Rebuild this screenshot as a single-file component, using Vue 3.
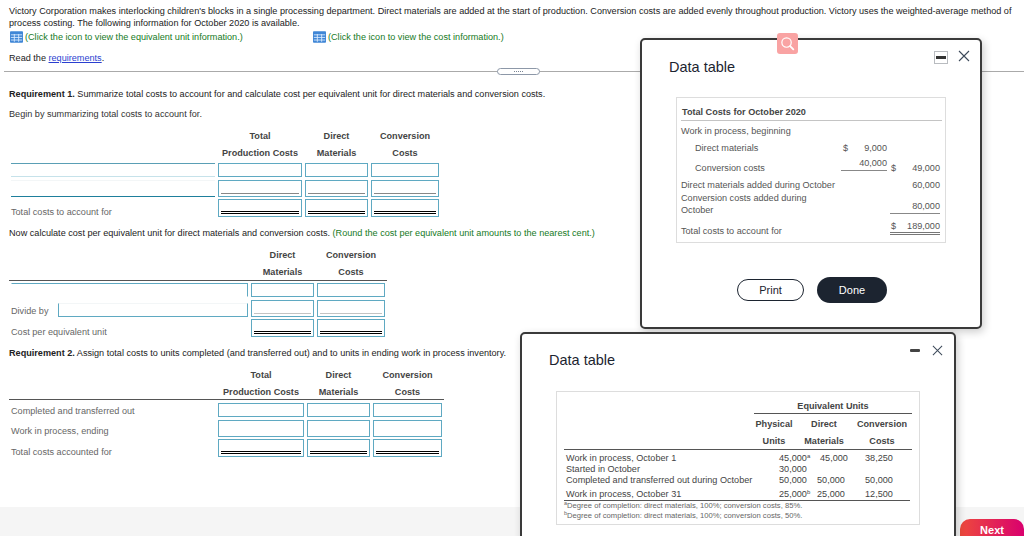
<script setup>
const table1Rows = [
  { label: '', kind: 'plain', h: 'r1', labelClass: 'line-a' },
  { label: '', kind: 'single', h: 'r2', labelClass: 'line-b' },
  { label: 'Total costs to account for', kind: 'double', h: 'r3', labelClass: '' },
]
const table3Rows = [
  { label: 'Completed and transferred out', kind: 'plain', h: 'r1' },
  { label: 'Work in process, ending', kind: 'plain', h: 'r2' },
  { label: 'Total costs accounted for', kind: 'double', h: 'r3' },
]
const units = [
  { label: 'Work in process, October 1', a: '45,000', sup: 'a', b: '45,000', c: '38,250', shiftB: true },
  { label: 'Started in October', a: '30,000', sup: '', b: '', c: '' },
  { label: 'Completed and transferred out during October', a: '50,000', sup: '', b: '50,000', c: '50,000' },
  { label: 'Work in process, October 31', a: '25,000', sup: 'b', b: '25,000', c: '12,500', tall: true },
]
</script>

<template>
  <div class="page">
    <main class="content">
      <p class="para">Victory Corporation makes interlocking children's blocks in a single processing department. Direct materials are added at the start of production. Conversion costs are added evenly throughout production. Victory uses the weighted-average method of process costing. The following information for October 2020 is available.</p>
      <div class="links">
        <span class="link-item link-first">
          <svg class="grid-icon" viewBox="0 0 15 13"><rect width="15" height="13" rx="1" fill="#3f86d6"/><path d="M1 4h13M1 7h13M1 10h13M5 3v9M10 3v9" stroke="#dcecff" stroke-width="1"/></svg>
          <span class="green">(Click the icon to view the equivalent unit information.)</span>
        </span>
        <span class="link-item">
          <svg class="grid-icon" viewBox="0 0 15 13"><rect width="15" height="13" rx="1" fill="#3f86d6"/><path d="M1 4h13M1 7h13M1 10h13M5 3v9M10 3v9" stroke="#dcecff" stroke-width="1"/></svg>
          <span class="green">(Click the icon to view the cost information.)</span>
        </span>
      </div>
      <p class="read">Read the <a class="req-link">requirements</a>.</p>
      <div class="divider"><span class="handle"><i v-for="n in 5" :key="n"></i></span></div>

      <p class="req1"><b>Requirement 1.</b> Summarize total costs to account for and calculate cost per equivalent unit for direct materials and conversion costs.</p>
      <p class="begin">Begin by summarizing total costs to account for.</p>

      <section class="table t1">
        <div class="head"></div><div class="head">Total</div><div class="head">Direct</div><div class="head">Conversion</div>
        <div class="head"></div><div class="head">Production Costs</div><div class="head">Materials</div><div class="head">Costs</div>
        <template v-for="(row, i) in table1Rows" :key="i">
          <div class="label" :class="[row.h, row.labelClass]">{{ row.label }}</div>
          <div v-for="n in 3" :key="n" class="cell" :class="row.h"><div :class="row.kind"></div></div>
        </template>
      </section>

      <p class="now">Now calculate cost per equivalent unit for direct materials and conversion costs. <span class="green">(Round the cost per equivalent unit amounts to the nearest cent.)</span></p>

      <section class="table t2">
        <div class="head"></div><div class="head">Direct</div><div class="head">Conversion</div>
        <div class="head ruled"></div><div class="head ruled">Materials</div><div class="head ruled">Costs</div>
        <div class="cell r1 wide"></div>
        <div class="cell r1"></div><div class="cell r1"></div>
        <div class="label r2 divide"><span>Divide by</span><div class="cell divide-input"></div></div>
        <div class="cell r2"><div class="single light"></div></div><div class="cell r2"><div class="single light"></div></div>
        <div class="label r3">Cost per equivalent unit</div>
        <div class="cell r3"><div class="double"></div></div><div class="cell r3"><div class="double"></div></div>
      </section>

      <p class="req2"><b>Requirement 2.</b> Assign total costs to units completed (and transferred out) and to units in ending work in process inventory.</p>

      <section class="table t3">
        <div class="head"></div><div class="head">Total</div><div class="head">Direct</div><div class="head">Conversion</div>
        <div class="head ruled"></div><div class="head ruled">Production Costs</div><div class="head ruled">Materials</div><div class="head ruled">Costs</div>
        <template v-for="(row, i) in table3Rows" :key="i">
          <div class="label" :class="row.h">{{ row.label }}</div>
          <div v-for="n in 3" :key="n" class="cell" :class="row.h"><div :class="row.kind"></div></div>
        </template>
      </section>
    </main>

    <footer class="footer"><button class="next">Next</button></footer>

    <!-- cost window -->
    <div class="window win-cost">
      <div class="search-tab">
        <svg viewBox="0 0 16 16" width="15" height="15"><circle cx="7" cy="7" r="5" fill="none" stroke="#fff" stroke-width="1.3"/><path d="M10.8 10.8l3.4 3.4" stroke="#fff" stroke-width="2" stroke-linecap="round"/></svg>
      </div>
      <div class="win-controls cost-controls">
        <span class="min-box"><i></i></span>
        <svg class="close close-up" viewBox="0 0 12 12"><path d="M1 1l10 10M11 1L1 11" stroke="#3d4a5a" stroke-width="1.1"/></svg>
      </div>
      <h2 class="win-title">Data table</h2>
      <div class="data-box cost-box">
        <div class="cost-title">Total Costs for October 2020</div>
        <div class="cost-row row-a"><span>Work in process, beginning</span></div>
        <div class="cost-row row-b">
          <span class="indent">Direct materials</span>
          <span class="amt"><i>$</i><i>9,000</i></span><span class="amt2"></span>
        </div>
        <div class="cost-row row-c">
          <span class="indent">Conversion costs</span>
          <span class="amt amt-under"><i></i><i>40,000</i></span>
          <span class="amt2"><i>$</i><i>49,000</i></span>
        </div>
        <div class="cost-row row-d">
          <span>Direct materials added during October</span><span class="amt"></span>
          <span class="amt2"><i></i><i>60,000</i></span>
        </div>
        <div class="cost-row row-e">
          <span class="wrap">Conversion costs added during October</span><span class="amt"></span>
          <span class="amt2 amt2-under"><i></i><i>80,000</i></span>
        </div>
        <div class="cost-row row-f">
          <span class="last-label">Total costs to account for</span><span class="amt"></span>
          <span class="amt2 amt2-double"><i>$</i><i>189,000</i></span>
        </div>
      </div>
      <div class="win-actions">
        <button class="btn-print">Print</button>
        <button class="btn-done">Done</button>
      </div>
    </div>

    <!-- units window -->
    <div class="window win-units">
      <div class="win-controls units-controls">
        <span class="min-bar"></span>
        <svg class="close close-sm" viewBox="0 0 12 12"><path d="M1 1l10 10M11 1L1 11" stroke="#3d4a5a" stroke-width="1.1"/></svg>
      </div>
      <h2 class="win-title units-title">Data table</h2>
      <div class="data-box units-box">
        <div class="eq-head"><span>Equivalent Units</span></div>
        <div class="u-head"><span></span><span>Physical</span><span>Direct</span><span>Conversion</span></div>
        <div class="u-head u-head-b"><span></span><span>Units</span><span>Materials</span><span>Costs</span></div>
        <div v-for="(u, i) in units" :key="i" class="u-row" :class="{ tall: u.tall }">
          <span>{{ u.label }}</span>
          <span>{{ u.a }}<sup v-if="u.sup">{{ u.sup }}</sup></span>
          <span :class="{ 'num-b': u.shiftB }">{{ u.b }}</span>
          <span>{{ u.c }}</span>
        </div>
        <div class="note note-a"><sup>a</sup>Degree of completion: direct materials, 100%; conversion costs, 85%.</div>
        <div class="note"><sup>b</sup>Degree of completion: direct materials, 100%; conversion costs, 50%.</div>
      </div>
    </div>
  </div>
</template>

<style>
html, body { margin: 0; padding: 0; background: #fff; }
</style>

<style scoped>
.page {
  position: relative;
  width: 1024px;
  height: 536px;
  overflow: hidden;
  display: flex;
  flex-direction: column;
  background: #fff;
  font-family: "Liberation Sans", Arial, sans-serif;
  font-size: 9.12px;
  line-height: 12px;
  color: #222;
}
p { margin: 0; }
.content { flex: 1; padding: 5px 0 0 9px; min-height: 0; }
.para { width: 1010px; }
.green { color: #167a1e; }
.links { display: flex; height: 14px; margin-top: 1px; align-items: center; }
.link-item { display: flex; align-items: center; gap: 2px; }
.link-first { width: 304px; flex: none; padding-left: 1px; box-sizing: border-box; }
.grid-icon { width: 13px; height: 12px; flex: none; }
.read { margin-top: 8px; }
.req-link { color: #2a3fd0; text-decoration: underline; }
.divider {
  margin: 7px 0 0 -5px;
  height: 1px;
  background: #aaa;
  display: flex;
  align-items: center;
}
.handle {
  margin-left: 493px;
  width: 41px;
  height: 5px;
  border: 1px solid #8d98a8;
  border-radius: 4px;
  background: #fff;
  display: flex;
  align-items: center;
  justify-content: center;
  gap: 1px;
}
.handle i { width: 1px; height: 1px; background: #7a8594; }
.req1 { margin-top: 16px; }
.begin { margin-top: 8px; color: #333; }

.table { display: grid; margin-left: 2px; }
.t1 { margin-top: 8px; grid-template-columns: 204px 84px 63px 68px; column-gap: 3px; }
.t2 { margin-top: 8px; grid-template-columns: 237px 63px 68px; column-gap: 3px; }
.t3 { margin-top: 8px; grid-template-columns: 204px 86px 63px 69px; column-gap: 3px; }
.head {
  height: 17px;
  line-height: 17px;
  text-align: center;
  font-weight: 700;
  color: #444;
  white-space: nowrap;
}
.ruled { height: 16px; line-height: 17px; box-sizing: border-box; border-bottom: 1px solid #555; margin: 0 -1.5px; }
.t2 .ruled { height: 17px; }
.t2 .head.ruled:nth-child(4), .t3 .head.ruled:nth-child(5) { margin-left: -2px; }
.r1 { height: 14px; margin-top: 2px; }
.r2 { height: 17px; margin-top: 3px; }
.r3 { height: 18px; margin-top: 2px; }
.t1 .r1 { margin-top: 1px; }
.t3 .r1 { margin-top: 3px; }
.label { display: flex; align-items: center; color: #666; white-space: nowrap; padding-top: 1px; box-sizing: border-box; }
.r3.label { padding-top: 8px; }
.t3 .r2.label { padding-top: 5px; }
.line-a { border-top: 1px solid #5a9fb5; border-bottom: 1px solid #c6e2ea; }
.line-b { border-top: 1px solid #f3f6f7; border-bottom: 1px solid #1e7f9c; }
.cell {
  box-sizing: border-box;
  border: 1px solid #5fa9c2;
  background: #fff;
  padding: 0 2px 2px;
  display: flex;
  flex-direction: column;
  justify-content: flex-end;
}
.single { border-bottom: 1px solid #888; }
.single.light { border-bottom-color: #c4c4c4; }
.double { border-bottom: 3px double #000; }
.wide { border-left-color: transparent; border-bottom-color: transparent; }
.divide { padding-top: 4px; }
.divide span { width: 47px; flex: none; }
.divide-input { flex: 1; height: 14px; align-self: flex-end; border-top-color: #f3f6f7; }

.now { margin-top: 10px; }
.req2 { margin-top: 10px; }

.footer {
  flex: none;
  height: 29px;
  padding-top: 12px;
  box-sizing: border-box;
  background: #f5f5f5;
  display: flex;
  justify-content: flex-end;
  align-items: flex-start;
  overflow: hidden;
}
.next {
  width: 64px;
  height: 22px;
  border: 0;
  padding: 0;
  border-radius: 10px 10px 0 0;
  background: linear-gradient(90deg, #ee4a3c, #d9006e);
  color: #fff;
  font: 700 11px "Liberation Sans", Arial, sans-serif;
}

.window {
  position: absolute;
  box-sizing: border-box;
  background: #fff;
  border: 2px solid #3a3a3a;
  border-radius: 5px;
  box-shadow: 2px 3px 8px rgba(0, 0, 0, 0.2);
}
.win-cost { left: 640px; top: 38px; width: 342px; height: 291px; display: flex; flex-direction: column; }
.win-units { left: 520px; top: 332px; width: 436px; height: 230px; }
.win-title {
  margin: 18px 0 0 27px;
  font-size: 14.5px;
  line-height: 18px;
  font-weight: 400;
  color: #1c2430;
}
.units-title { margin-top: 17px; }
.search-tab {
  position: absolute;
  left: 135px;
  top: -7px;
  width: 21px;
  height: 21px;
  background: #f9a3a3;
  border-radius: 3px;
  display: flex;
  align-items: center;
  justify-content: center;
}
.win-controls { position: absolute; display: flex; align-items: center; }
.cost-controls { left: 292px; top: 11px; gap: 10px; }
.units-controls { left: 388px; top: 11px; gap: 12px; }
.min-box {
  width: 14px;
  height: 13px;
  box-sizing: border-box;
  border: 1px solid #b9bcc0;
  display: flex;
  align-items: center;
  justify-content: center;
}
.min-box i { width: 10px; height: 3px; background: #333; }
.min-bar { width: 10px; height: 3px; background: #444; border-radius: 1px; }
.close { width: 12px; height: 12px; }
.close-up { margin-top: -3px; }
.close-sm { width: 11px; height: 11px; }
.data-box { box-sizing: border-box; border: 1px solid #ddd; color: #555; }
.cost-box { margin: 21px 0 0 34px; width: 270px; height: 146px; padding: 7px 3px 0 4px; }
.cost-title { height: 15px; line-height: 14px; font-weight: 700; color: #444; border-bottom: 1px solid #c4c4c4; padding-left: 1px; }
.cost-row { display: grid; grid-template-columns: 160px 46px 54px; align-items: center; }
.cost-row i { font-style: normal; }
.amt, .amt2 { display: flex; justify-content: space-between; }
.amt { padding-left: 2px; }
.amt2 { padding-left: 4px; margin-right: 1px; }
.row-a { height: 18px; padding-top: 1px; box-sizing: border-box; }
.row-b { height: 18px; }
.row-c { height: 21px; }
.row-d { height: 14px; }
.row-e { height: 25px; }
.row-f { height: 20px; }
.indent { padding-left: 14px; }
.amt-under { align-self: start; height: 13px; border-bottom: 1px solid #888; }
.wrap { line-height: 11.5px; width: 130px; }
.amt2-under { grid-column: 3; align-self: start; margin-top: 8px; height: 13px; border-bottom: 1px solid #888; margin-left: 3px; padding-left: 1px; }
.last-label { align-self: end; }
.amt2-double { align-self: start; margin-top: 3px; border-bottom: 3px double #777; margin-left: 3px; padding-left: 1px; }
.win-actions { display: flex; align-items: center; gap: 13px; margin: 34px 0 0 95px; }
.btn-print {
  width: 67px;
  height: 22px;
  box-sizing: border-box;
  border: 1.5px solid #1c2430;
  border-radius: 11px;
  background: #fff;
  color: #1c2430;
  font: 11px "Liberation Sans", Arial, sans-serif;
  padding: 0;
}
.btn-done {
  width: 70px;
  height: 26px;
  border: 0;
  border-radius: 13px;
  background: #1c2430;
  color: #fff;
  font: 11px "Liberation Sans", Arial, sans-serif;
  padding: 0;
}
.units-box { margin: 22px 0 0 34px; width: 364px; height: 134px; padding: 8px 6px 0 7px; }
.eq-head { margin-left: 190px; height: 14px; line-height: 13px; border-bottom: 1px solid #555; text-align: center; font-weight: 700; color: #444; width: 158px; box-sizing: border-box; }
.u-head { display: grid; grid-template-columns: 188px 44px 56px 60px; height: 17px; line-height: 20px; text-align: center; font-weight: 700; color: #444; }
.u-head-b { height: 19px; line-height: 21px; border-bottom: 1px solid #555; width: 348px; box-sizing: border-box; }
.u-row { display: grid; grid-template-columns: 213px 38px 48px 30px; height: 11px; line-height: 11px; color: #444; padding-left: 2px; white-space: nowrap; }
.u-row:nth-child(4) { margin-top: 3px; }
.u-row.tall { height: 15px; line-height: 17px; border-bottom: 1px solid #555; width: 346px; box-sizing: border-box; }
.num-b { padding-left: 3px; }
sup { font-size: 6px; line-height: 0; vertical-align: 3px; }
.note { font-size: 7.65px; line-height: 10px; color: #666; white-space: nowrap; }
.note sup { font-size: 5.5px; }
</style>
